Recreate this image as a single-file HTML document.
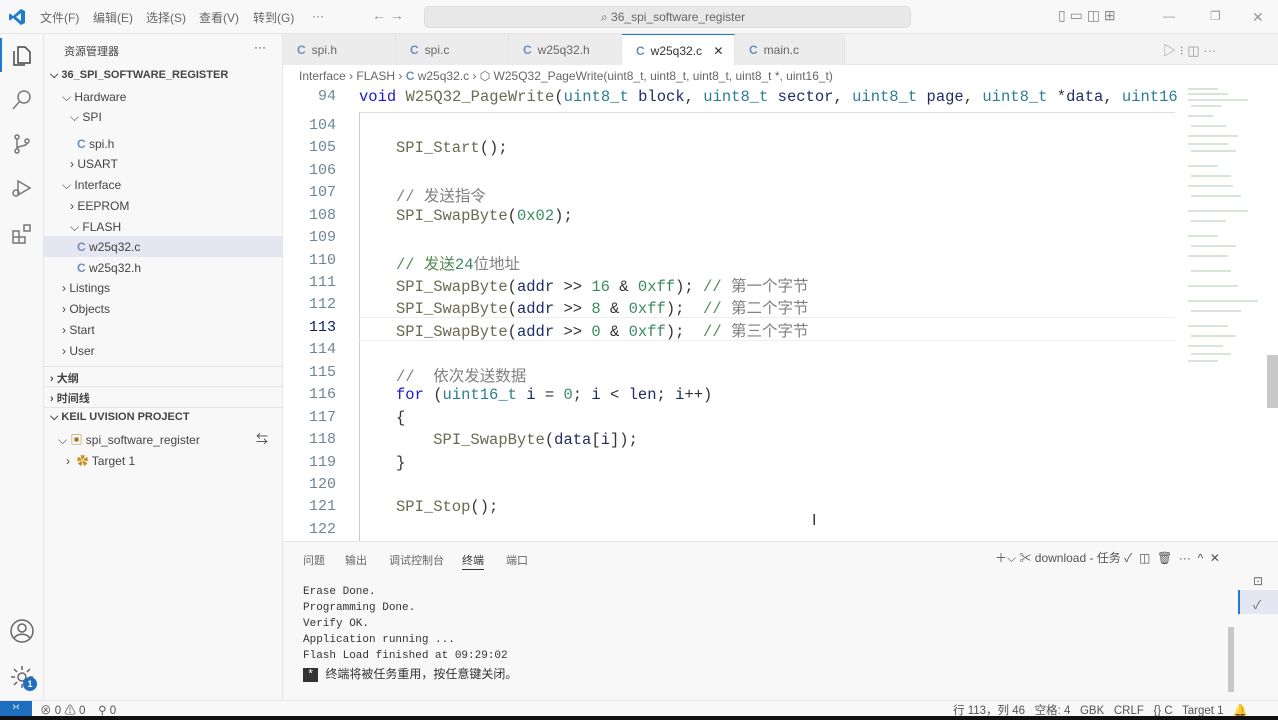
<!DOCTYPE html>
<html><head><meta charset="utf-8"><style>
*{margin:0;padding:0;box-sizing:border-box}
body{width:1278px;height:720px;overflow:hidden;background:#fff;font-family:"Liberation Sans","Noto Sans CJK SC",sans-serif;font-size:12px;color:#444;position:relative}
.abs{position:absolute}
#title{left:0;top:0;width:1278px;height:34px;background:#f8f8f8;border-bottom:1px solid #e5e5e5}
#title .m{top:9px;font-size:12px;color:#666}
#act{left:0;top:34px;width:44px;height:666px;background:#f8f8f8;border-right:1px solid #e5e5e5}
#side{left:44px;top:34px;width:239px;height:666px;background:#f8f8f8;border-right:1px solid #e5e5e5}
.row{position:absolute;font-size:12px;color:#444;white-space:nowrap}
#tabs{left:283px;top:34px;width:995px;height:31px;background:#f3f3f3;border-bottom:1px solid #e5e5e5}
.tab{position:absolute;top:0;height:31px;border-right:1px solid #e5e5e5;font-size:12px;color:#666;padding:9px 0 0 14px;background:#ececec}
.tab b{color:#6c8ebf;margin-right:6px;font-weight:bold}
#code{left:283px;top:88px;width:900px;font-family:"Liberation Mono",monospace;font-size:15.5px}
.ln{position:absolute;left:0;width:53px;text-align:right;color:#6b8796;font-size:15px}
.cl{position:absolute;left:113px;white-space:pre;color:#333}
.f{color:#6a6a50}.n{color:#3b8a5e}.c{color:#4f8a50}.k{color:#1a1ad0}.t{color:#2b7f8f}.v{color:#1f2d6a}.z{color:#808080;font-family:"Liberation Mono","Noto Sans CJK SC",monospace}
#panel{left:283px;top:541px;width:995px;height:159px;background:#f8f8f8;border-top:1px solid #e5e5e5}
.term{position:absolute;left:20px;font-family:"Liberation Mono",monospace;font-size:11px;color:#333;white-space:pre}
#status{left:0;top:700px;width:1278px;height:16px;background:#f8f8f8;border-top:1px solid #e5e5e5;font-size:11.5px;color:#555}
</style></head><body>
<div id="title" class="abs">
<svg class="abs" style="left:8px;top:8px" width="18" height="18" viewBox="0 0 18 18"><path d="M13 1 L17 3 V15 L13 17 L5 10 L2 12.5 L1 11.5 V6.5 L2 5.5 L5 8 Z M13 5 L8 9 L13 13 Z" fill="#1f7bd0"/></svg>
<span class="abs m" style="left:40px">文件(F)</span><span class="abs m" style="left:93px">编辑(E)</span><span class="abs m" style="left:146px">选择(S)</span><span class="abs m" style="left:199px">查看(V)</span><span class="abs m" style="left:253px">转到(G)</span><span class="abs m" style="left:312px">···</span>
<span class="abs m" style="left:372px;top:7px;font-size:14px;color:#999">← →</span>
<div class="abs" style="left:424px;top:6px;width:487px;height:22px;background:#e8e8e8;border-radius:5px;border:1px solid #ddd;font-size:12px;color:#666;padding:3px 0 0 176px">⌕ 36_spi_software_register</div>
<span class="abs m" style="left:1058px;top:7px;font-size:14px;color:#888">▯ ▭ ◫ ⊞</span>
<span class="abs m" style="left:1163px;color:#999">—</span><span class="abs m" style="left:1210px;color:#999">❐</span><span class="abs m" style="left:1252px;color:#999;font-size:14px">✕</span>
</div>
<div id="act" class="abs">
<div class="abs" style="left:0;top:4px;width:2px;height:34px;background:#1f7bd0"></div>
<svg class="abs" style="left:10px;top:10px" width="24" height="24" viewBox="0 0 24 24" fill="none" stroke="#444" stroke-width="1.5"><path d="M8 3h7l5 5v11H8z M4 7v14h11"/></svg>
<svg class="abs" style="left:10px;top:54px" width="24" height="24" viewBox="0 0 24 24" fill="none" stroke="#777" stroke-width="1.5"><circle cx="14" cy="9" r="6"/><path d="M10 13 3 21"/></svg>
<svg class="abs" style="left:10px;top:98px" width="24" height="24" viewBox="0 0 24 24" fill="none" stroke="#777" stroke-width="1.5"><circle cx="7" cy="5" r="2"/><circle cx="7" cy="19" r="2"/><circle cx="17" cy="9" r="2"/><path d="M7 7v10M17 11c0 4-10 2-10 6"/></svg>
<svg class="abs" style="left:10px;top:142px" width="24" height="24" viewBox="0 0 24 24" fill="none" stroke="#777" stroke-width="1.5"><path d="M8 5l12 7-12 7z"/><circle cx="6" cy="17" r="3"/></svg>
<svg class="abs" style="left:10px;top:188px" width="24" height="24" viewBox="0 0 24 24" fill="none" stroke="#777" stroke-width="1.5"><path d="M3 9h6v6H3zM9 15h6v6H9zM3 15h6v6H3zM14 3h6v6h-6z"/></svg>
<svg class="abs" style="left:9px;top:584px" width="26" height="26" viewBox="0 0 26 26" fill="none" stroke="#666" stroke-width="1.5"><circle cx="13" cy="13" r="11"/><circle cx="13" cy="10" r="4"/><path d="M5 20c4-5 12-5 16 0"/></svg>
<svg class="abs" style="left:9px;top:630px" width="26" height="26" viewBox="0 0 26 26" fill="none" stroke="#666" stroke-width="1.5"><circle cx="13" cy="13" r="4"/><path d="M13 2v4M13 20v4M2 13h4M20 13h4M5 5l3 3M18 18l3 3M5 21l3-3M18 8l3-3"/></svg>
<div class="abs" style="left:23px;top:643px;width:14px;height:14px;border-radius:7px;background:#1f6fc0;color:#fff;font-size:9px;text-align:center;line-height:14px;font-weight:bold">1</div>
</div>
<div id="side" class="abs">
<span class="row" style="left:20px;top:9px;font-size:11px">资源管理器</span><span class="row" style="left:210px;top:6px">···</span>
<span class="row" style="left:6px;top:35px;font-weight:bold;font-size:11px">⌵ 36_SPI_SOFTWARE_REGISTER</span>
<span class="row" style="left:18px;top:56px">⌵ Hardware</span>
<span class="row" style="left:26px;top:76px">⌵ SPI</span>
<span class="row" style="left:33px;top:103px"><b style="color:#6c8ebf">C</b> spi.h</span>
<span class="row" style="left:26px;top:123px">› USART</span>
<span class="row" style="left:18px;top:144px">⌵ Interface</span>
<span class="row" style="left:26px;top:165px">› EEPROM</span>
<span class="row" style="left:26px;top:186px">⌵ FLASH</span>
<div class="abs" style="left:0;top:202px;width:239px;height:21px;background:#e4e6f1"></div>
<span class="row" style="left:33px;top:206px"><b style="color:#6c8ebf">C</b> w25q32.c</span>
<span class="row" style="left:33px;top:227px"><b style="color:#6c8ebf">C</b> w25q32.h</span>
<span class="row" style="left:18px;top:247px">› Listings</span>
<span class="row" style="left:18px;top:268px">› Objects</span>
<span class="row" style="left:18px;top:289px">› Start</span>
<span class="row" style="left:18px;top:310px">› User</span>
<div class="abs" style="left:0;top:332px;width:239px;height:1px;background:#e5e5e5"></div>
<span class="row" style="left:6px;top:336px;font-weight:bold;font-size:11px">› 大纲</span>
<div class="abs" style="left:0;top:352px;width:239px;height:1px;background:#e5e5e5"></div>
<span class="row" style="left:6px;top:356px;font-weight:bold;font-size:11px">› 时间线</span>
<div class="abs" style="left:0;top:373px;width:239px;height:1px;background:#e5e5e5"></div>
<span class="row" style="left:6px;top:377px;font-weight:bold;font-size:11px">⌵ KEIL UVISION PROJECT</span>
<span class="row" style="left:14px;top:397px">⌵ <span style="color:#a07020">▣</span> spi_software_register</span><span class="row" style="left:212px;top:396px">⇆</span>
<span class="row" style="left:22px;top:418px">›&nbsp; <span style="color:#c8901a">✿</span> Target 1</span>
</div>
<div id="tabs" class="abs">
<div class="tab" style="left:0;width:113px">  <b>C</b>spi.h</div>
<div class="tab" style="left:113px;width:113px"><b>C</b>spi.c</div>
<div class="tab" style="left:226px;width:113px"><b>C</b>w25q32.h</div>
<div class="tab" style="left:339px;width:113px;background:#fff;color:#333;border-top:1px solid #1f7bd0;height:32px"><b>C</b>w25q32.c <span style="margin-left:8px">✕</span></div>
<div class="tab" style="left:452px;width:110px"><b>C</b>main.c</div>
<span class="abs" style="left:880px;top:6px;color:#999;font-size:13px">▷ ⁝ ◫ ···</span>
</div>
<div class="abs" style="left:299px;top:69px;font-size:12px;color:#666;white-space:nowrap">Interface › FLASH › <b style="color:#6c8ebf">C</b> w25q32.c › ⬡ W25Q32_PageWrite(uint8_t, uint8_t, uint8_t, uint8_t *, uint16_t)</div>
<div id="code" class="abs">
<div class="ln" style="top:0px">94</div><div class="cl" style="left:76px;top:0px"><span class="k">void</span> <span class="f">W25Q32_PageWrite</span>(<span class="t">uint8_t</span> <span class="v">block</span>, <span class="t">uint8_t</span> <span class="v">sector</span>, <span class="t">uint8_t</span> <span class="v">page</span>, <span class="t">uint8_t</span> *<span class="v">data</span>, <span class="t">uint16</span></div>
<div class="abs" style="left:76px;top:24px;width:816px;height:1px;background:#ddd"></div>
<div class="abs" style="left:76px;top:24px;width:1px;height:430px;background:#ccc"></div>
<div class="ln" style="top:29px">104</div>
<div class="ln" style="top:51px">105</div><div class="cl" style="top:51px"><span class="f">SPI_Start</span>();</div>
<div class="ln" style="top:74px">106</div>
<div class="ln" style="top:96px">107</div><div class="cl c z" style="top:96px">// 发送指令</div>
<div class="ln" style="top:119px">108</div><div class="cl" style="top:119px"><span class="f">SPI_SwapByte</span>(<span class="n">0x02</span>);</div>
<div class="ln" style="top:141px">109</div>
<div class="ln" style="top:164px">110</div><div class="cl z" style="top:164px"><span class="c">// 发送</span><span class="n">24</span>位地址</div>
<div class="ln" style="top:186px">111</div><div class="cl" style="top:186px"><span class="f">SPI_SwapByte</span>(<span class="v">addr</span> &gt;&gt; <span class="n">16</span> &amp; <span class="n">0xff</span>); <span class="c">//</span> <span class="z">第一个字节</span></div>
<div class="ln" style="top:208px">112</div><div class="cl" style="top:208px"><span class="f">SPI_SwapByte</span>(<span class="v">addr</span> &gt;&gt; <span class="n">8</span> &amp; <span class="n">0xff</span>);  <span class="c">//</span> <span class="z">第二个字节</span></div>
<div class="abs" style="left:76px;top:229px;width:816px;height:24px;border-top:1px solid #eee;border-bottom:1px solid #eee"></div>
<div class="ln" style="top:231px;color:#0b216f">113</div><div class="cl" style="top:231px"><span class="f">SPI_SwapByte</span>(<span class="v">addr</span> &gt;&gt; <span class="n">0</span> &amp; <span class="n">0xff</span>);  <span class="c">//</span> <span class="z">第三个字节</span></div>
<div class="ln" style="top:253px">114</div>
<div class="ln" style="top:276px">115</div><div class="cl c z" style="top:276px">//  依次发送数据</div>
<div class="ln" style="top:298px">116</div><div class="cl" style="top:298px"><span class="k">for</span> (<span class="t">uint16_t</span> <span class="v">i</span> = <span class="n">0</span>; <span class="v">i</span> &lt; <span class="v">len</span>; <span class="v">i</span>++)</div>
<div class="ln" style="top:321px">117</div><div class="cl" style="top:321px">{</div>
<div class="ln" style="top:343px">118</div><div class="cl" style="top:343px">    <span class="f">SPI_SwapByte</span>(<span class="v">data</span>[<span class="v">i</span>]);</div>
<div class="ln" style="top:366px">119</div><div class="cl" style="top:366px">}</div>
<div class="ln" style="top:388px">120</div>
<div class="ln" style="top:410px">121</div><div class="cl" style="top:410px"><span class="f">SPI_Stop</span>();</div>
<div class="ln" style="top:433px">122</div>
</div>
<svg class="abs" style="left:1183px;top:86px" width="85" height="290"><g stroke="#7aa97a" stroke-width="1" opacity=".6">
<path d="M5 3h30M5 8h40M5 14h60M5 30h25M5 50h50M5 58h40M5 80h30M5 100h45M5 125h60M5 150h30M5 170h40M5 200h50M5 215h70M5 240h40M5 260h35M5 275h30M8 20h30M8 40h35M8 65h45M8 90h40M8 110h50M8 135h35M8 160h45M8 185h40M8 225h50M8 250h45M8 268h40"/></g></svg>
<div class="abs" style="left:1267px;top:355px;width:11px;height:53px;background:#c8c8c8"></div>
<span class="abs" style="left:812px;top:512px;font-size:16px;color:#333">I</span>
<div id="panel" class="abs">
<span class="abs" style="left:20px;top:10px;font-size:11px;color:#666">问题</span>
<span class="abs" style="left:62px;top:10px;font-size:11px;color:#666">输出</span>
<span class="abs" style="left:106px;top:10px;font-size:11px;color:#666">调试控制台</span>
<span class="abs" style="left:179px;top:10px;font-size:11px;color:#333">终端</span><div class="abs" style="left:179px;top:27px;width:22px;height:1px;background:#333"></div>
<span class="abs" style="left:223px;top:10px;font-size:11px;color:#666">端口</span>
<span class="abs" style="left:712px;top:7px;font-size:12px;color:#555;white-space:nowrap">＋⌵ ✂ download - 任务 ✓ &nbsp;◫ &nbsp;🗑 &nbsp;··· &nbsp;^ &nbsp;✕</span>
<div class="term" style="top:44px">Erase Done.</div>
<div class="term" style="top:60px">Programming Done.</div>
<div class="term" style="top:76px">Verify OK.</div>
<div class="term" style="top:92px">Application running ...</div>
<div class="term" style="top:108px">Flash Load finished at 09:29:02</div>
<div class="term" style="top:123px;font-size:12px;font-family:'Liberation Mono','Noto Sans CJK SC',monospace"><span style="background:#333;color:#fff;padding:0 4px">*</span> 终端将被任务重用，按任意键关闭。</div>
<div class="abs" style="left:945px;top:85px;width:6px;height:65px;background:#c8c8c8"></div>
<div class="abs" style="left:955px;top:48px;width:40px;height:24px;background:#e4e6f1;border-left:2px solid #1f7bd0"></div>
<span class="abs" style="left:970px;top:32px;color:#666">⊡</span><span class="abs" style="left:970px;top:54px;color:#666">✓</span>
</div>
<div id="status" class="abs">
<div class="abs" style="left:0;top:0;width:32px;height:16px;background:#1f6fc0;color:#fff;text-align:center;font-size:11px">›‹</div>
<span class="abs" style="left:40px;top:1px">⊗ 0 ⚠ 0 &nbsp;&nbsp; ⚲ 0</span>
<span class="abs" style="left:953px;top:1px;white-space:nowrap">行 113，列 46 &nbsp; 空格: 4 &nbsp; GBK &nbsp; CRLF &nbsp; {} C &nbsp; Target 1 &nbsp; 🔔</span>
</div>
<div class="abs" style="left:0;top:716px;width:1278px;height:4px;background:#111"></div>
</body></html>
